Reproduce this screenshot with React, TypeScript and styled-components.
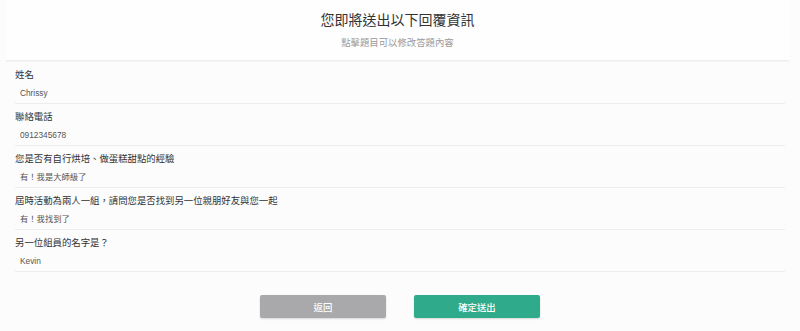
import React from 'react';
import styled, { createGlobalStyle } from 'styled-components';

const answers = [
  { question: '姓名', answer: 'Chrissy' },
  { question: '聯絡電話', answer: '0912345678' },
  { question: '您是否有自行烘培、做蛋糕甜點的經驗', answer: '有！我是大師級了' },
  { question: '屆時活動為兩人一組，請問您是否找到另一位親朋好友與您一起', answer: '有！我找到了' },
  { question: '另一位組員的名字是？', answer: 'Kevin' },
];

const App: React.FC = () => {
  return (
    <>
      <GlobalStyle />
      <Page>
        <Header>
          <Title>您即將送出以下回覆資訊</Title>
          <SubTitle>點擊題目可以修改答題內容</SubTitle>
        </Header>
        <List>
          {answers.map((item) => (
            <Row key={item.question}>
              <Question>{item.question}</Question>
              <Answer>{item.answer}</Answer>
            </Row>
          ))}
        </List>
        <Footer>
          <Button $variant="back">返回</Button>
          <Button $variant="submit">確定送出</Button>
        </Footer>
      </Page>
    </>
  );
};

const GlobalStyle = createGlobalStyle`
  body {
    margin: 0;
    background-color: #fcfcfd;
    font-family: "Liberation Sans", "Noto Sans CJK TC", sans-serif;
  }
`;

const Page = styled.div`
  width: 800px;
  height: 331px;
  display: flex;
  flex-direction: column;
  overflow: hidden;
`;

const Header = styled.div`
  margin: 0 10px 0 5px;
  height: 60px;
  box-sizing: border-box;
  padding-top: 12px;
  background-color: #fefeff;
  box-shadow: 0 2px 2px -1px rgba(0, 0, 0, 0.09);
  display: flex;
  flex-direction: column;
  align-items: center;
`;

const Title = styled.h1`
  margin: 0;
  font-size: 14px;
  line-height: 16px;
  font-weight: 400;
  color: #333;
`;

const SubTitle = styled.p`
  margin: 8px 0 0;
  font-size: 9.4px;
  line-height: 14px;
  color: #999;
`;

const List = styled.div`
  margin: 2px 15px 0 15px;
  display: flex;
  flex-direction: column;
`;

const Row = styled.div`
  padding: 6px 0 3px;
  border-bottom: 1px solid #ededf0;
  cursor: pointer;
`;

const Question = styled.div`
  font-size: 9.4px;
  line-height: 14px;
  color: #333;
`;

const Answer = styled.div`
  margin-top: 5px;
  padding-left: 5px;
  font-size: 8.3px;
  line-height: 13px;
  color: #555;
`;

const Footer = styled.div`
  margin-top: 23px;
  display: flex;
  justify-content: center;
  gap: 28px;
`;

const Button = styled.div<{ $variant: 'back' | 'submit' }>`
  width: 126px;
  height: 23px;
  border-radius: 2px;
  display: flex;
  align-items: center;
  justify-content: center;
  font-size: 9.4px;
  font-weight: 500;
  color: #fff;
  background-color: ${({ $variant }) => ($variant === 'submit' ? '#2fab8c' : '#a9a9ab')};
  box-shadow: 0 1px 2px rgba(0, 0, 0, 0.15);
  cursor: pointer;
`;

export default App;
